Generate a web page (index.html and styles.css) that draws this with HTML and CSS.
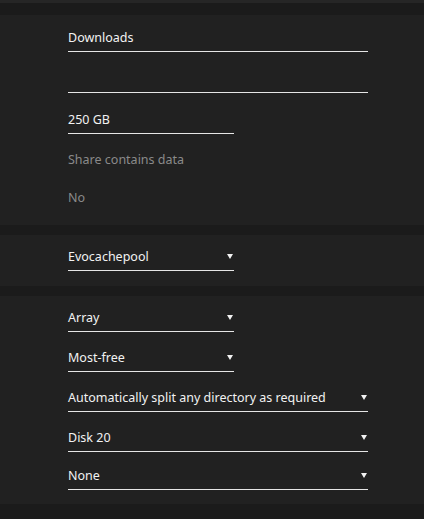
FILE: index.html
```html
<!DOCTYPE html>
<html lang="en">
<head>
    <meta charset="UTF-8">
    <meta name="viewport" content="width=device-width, initial-scale=1.0">
    <title>Share Settings</title>
    <link rel="stylesheet" href="styles.css">
</head>
<body>
    <div class="top-strip"></div>

    <div class="panel panel-share">
        <div class="field wide">Downloads</div>
        <div class="field wide"></div>
        <div class="field narrow">250 GB</div>
        <div class="label">Share contains data</div>
        <div class="label label-value">No</div>
    </div>

    <div class="panel panel-pool">
        <div class="field narrow select">Evocachepool</div>
    </div>

    <div class="panel panel-move">
        <div class="field narrow select">Array</div>
        <div class="field narrow select">Most-free</div>
        <div class="field wide select">Automatically split any directory as required</div>
        <div class="field wide select">Disk 20</div>
        <div class="field wide select last">None</div>
    </div>
</body>
</html>
```

FILE: styles.css
```css
body {
    margin: 0;
    background: #1b1b1b;
    font-family: 'Noto Sans', sans-serif;
    font-size: 12.5px;
    color: #f2f2f2;
}

.top-strip {
    height: 3px;
    background: #262626;
    margin-bottom: 12px;
}

.panel {
    background: #212121;
    padding-left: 68px;
    margin-bottom: 10px;
    display: flex;
    flex-direction: column;
    align-items: flex-start;
}

.panel-share {
    padding-top: 16px;
    padding-bottom: 17px;
    gap: 20px;
}

.panel-share .label {
    margin-top: -4px;
}

.panel-share .label-value {
    margin-top: -2px;
}

.panel-pool {
    padding-top: 15px;
    padding-bottom: 15px;
}

.panel-move {
    padding-top: 15px;
    padding-bottom: 14px;
    gap: 19px;
}

.panel-move .last {
    margin-top: -2px;
}

.field {
    box-sizing: border-box;
    height: 21px;
    line-height: 14px;
    border-bottom: 1px solid #e6e6e6;
    white-space: nowrap;
    position: relative;
}

.wide {
    width: 300px;
}

.narrow {
    width: 166px;
}

.select::after {
    content: '';
    position: absolute;
    right: 1px;
    top: 4px;
    border-left: 3px solid transparent;
    border-right: 3px solid transparent;
    border-top: 5px solid #f2f2f2;
}

.label {
    height: 20px;
    line-height: 20px;
    color: #8a8a8a;
}
```
